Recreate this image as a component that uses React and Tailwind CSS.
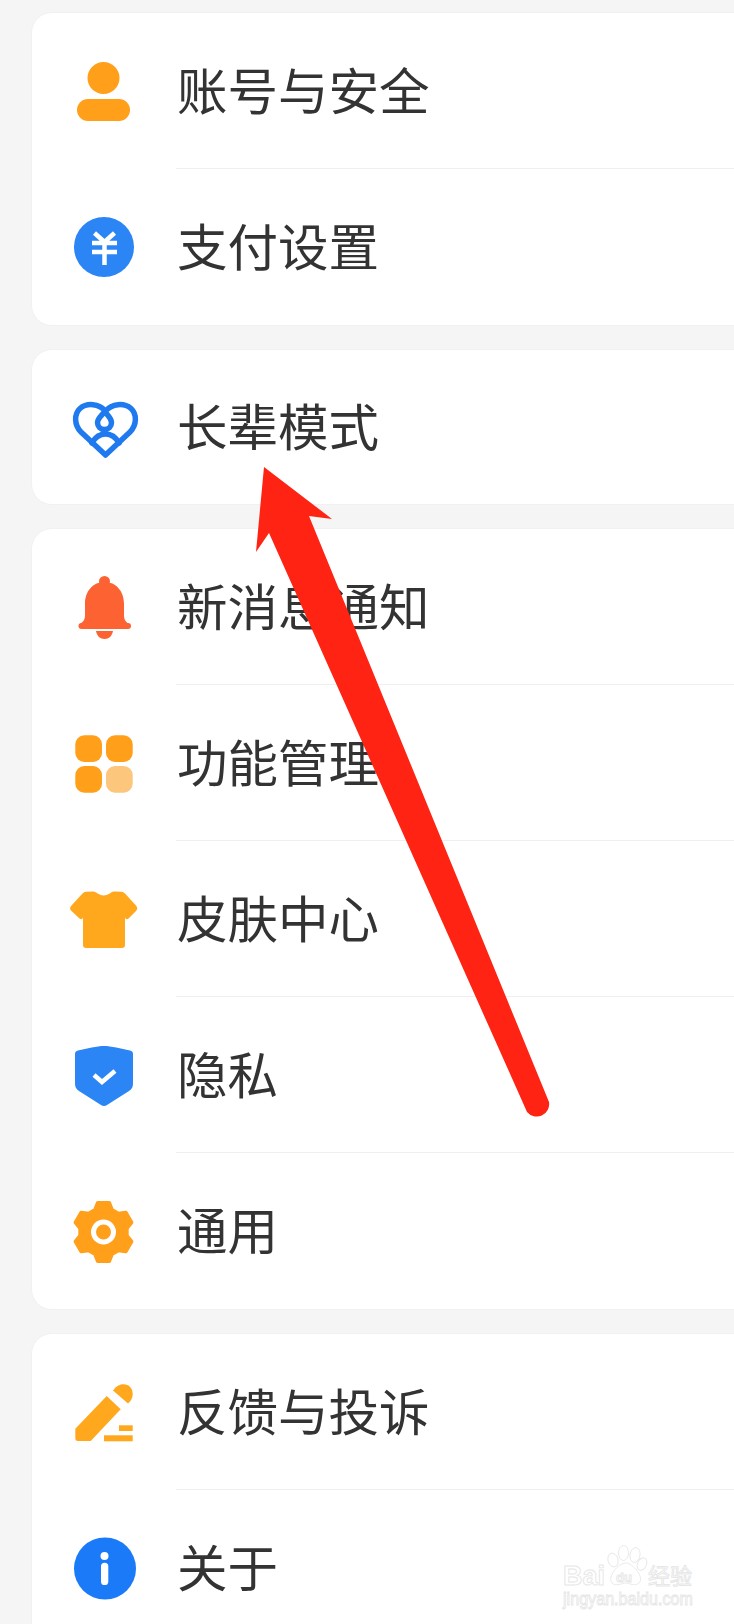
const ORANGE = "#ff9f1a";
const AMBER = "#ffa81d";
const BLUE = "#2b85f5";
const DEEP = "#1a7af8";

function Ico({ children }) {
  return (
    <svg viewBox="0 0 72 72" className="w-[72px] h-[72px] overflow-visible">
      {children}
    </svg>
  );
}

const Person = () => (
  <Ico>
    <circle cx="35.5" cy="23" r="16" fill={ORANGE} />
    <rect x="9" y="44" width="53" height="22" rx="11" fill={ORANGE} />
  </Ico>
);

const Yen = () => (
  <Ico>
    <circle cx="36" cy="36" r="30" fill={BLUE} />
    <path d="M26.5 22L36.5 31M46.5 22L36.5 31M24 32H49M24 41H49M36.5 31V54" stroke="#fff" strokeWidth="4.5" fill="none" />
  </Ico>
);

const Heart = () => (
  <Ico>
    <g fill="none" stroke="#1f7aef" strokeWidth="5.5" strokeLinecap="round" strokeLinejoin="round">
      <path d="M37.5 64L13 41C6 34 6 23 12 17.5C19 11.5 31 12.5 37.5 20C44 12.5 56 11.5 63 17.5C69 23 69 34 62 41Z" />
      <path d="M36.8 20C39 24.5 43.5 27 43.5 31.5C43.5 35.5 40.5 38.5 36.5 38.5C32.5 38.5 29.5 35.5 29.5 31.5C29.5 27 34.5 24.5 36.8 20Z" />
      <path d="M24 52C27 46.5 31.5 43 37.5 43C43.5 43 48 46.5 51 52" />
    </g>
  </Ico>
);

const Bell = () => (
  <Ico>
    <circle cx="36.5" cy="10.5" r="5.5" fill="#fc6232" />
    <path d="M36.5 11C25 11 17 20 17 33V44C17 49 15 51 12 53H61C58 51 56 49 56 44V33C56 20 48 11 36.5 11Z" fill="#fc6232" />
    <rect x="10.5" y="52" width="52.5" height="6" rx="3" fill="#fc6232" />
    <path d="M28 60H45C44 65 41 68 36.5 68C32 68 29 65 28 60Z" fill="#fc6232" />
  </Ico>
);

const Grid4 = () => (
  <Ico>
    <rect x="7.3" y="8.3" width="26.7" height="26.7" rx="9" fill={ORANGE} />
    <rect x="38" y="8.3" width="26.7" height="26.7" rx="9" fill={ORANGE} />
    <rect x="7.3" y="39" width="26.7" height="26.7" rx="9" fill={ORANGE} />
    <rect x="38" y="39" width="26.7" height="26.7" rx="9" fill="#fcc67c" />
  </Ico>
);

const Shirt = () => (
  <Ico>
    <path
      d="M25 8.5C29 9 31 12.5 35.7 12.5C40.5 12.5 42.5 9 46 8.5L53.5 8.7C55 8.9 56 9.5 57 10.5L68 22.5C69.6 24.3 69.6 26.3 68 28L60.5 35.5C59 37 57 36 57 34V62C57 64 56 65 54 65H18C16 65 15 64 15 62V34C15 36 13 37 11.5 35.5L3.5 28C1.6 26.3 1.6 24.3 3.5 22.5L14.5 10.5C15.5 9.5 16.5 8.9 18 8.7Z"
      fill={AMBER}
    />
  </Ico>
);

const Shield = () => (
  <Ico>
    <path
      d="M36 7C43 7 53 9.5 62 11.5C64 12 65 13 65 15V44C65 48 64 50 61 52L39 66C37 67.3 35 67.3 33 66L11 52C8 50 7 48 7 44V15C7 13 8 12 10 11.5C19 9.5 29 7 36 7Z"
      fill={BLUE}
    />
    <path d="M26 36L34 43L47 32" stroke="#fff" strokeWidth="4.5" fill="none" />
  </Ico>
);

function gearPoints(cx, cy, ro, ri) {
  const pts = [];
  for (let i = 0; i < 6; i++) {
    const a = -90 + i * 60;
    [[-21, ri], [-11, ro], [11, ro], [21, ri]].forEach(([d, r]) => {
      const t = ((a + d) * Math.PI) / 180;
      pts.push(`${(cx + r * Math.cos(t)).toFixed(2)},${(cy + r * Math.sin(t)).toFixed(2)}`);
    });
  }
  return pts.join(" ");
}

const Gear = () => (
  <Ico>
    <polygon points={gearPoints(35.5, 37, 29.5, 23.5)} fill={ORANGE} stroke={ORANGE} strokeWidth="4" strokeLinejoin="round" />
    <circle cx="35.5" cy="37" r="10" fill={ORANGE} stroke="#fff" strokeWidth="5" />
  </Ico>
);

const Pencil = () => (
  <Ico>
    <path d="M45 14.5C49 9.5 52 8.3 55.5 8.3C61 8.3 64.7 12.5 64.7 18C64.7 22 63 25 60 27.5Z" fill={AMBER} />
    <path d="M38.7 20L52.7 33.3L22.7 65H10C8 65 7.3 64 7.3 62V52.7Z" fill={AMBER} />
    <rect x="51" y="49.3" width="13.7" height="5.7" fill={AMBER} />
    <rect x="36" y="59.3" width="28.7" height="6" fill={AMBER} />
  </Ico>
);

const Info = () => (
  <Ico>
    <circle cx="37" cy="36.5" r="31" fill={DEEP} />
    <circle cx="36.5" cy="24" r="4" fill="#fff" />
    <rect x="33" y="30.7" width="7.3" height="22.3" rx="3.6" fill="#fff" />
  </Ico>
);

function Row({ icon, label, divider, height = "h-[155px]" }) {
  return (
    <div className="flex flex-col">
      <div className={`flex items-center ${height}`}>
        <div className="w-[144px] pl-[36px] flex items-center shrink-0">{icon}</div>
        <span className="text-[50.5px] leading-none text-[#333333] whitespace-nowrap ml-[1px] pb-[5px]">{label}</span>
      </div>
      {divider && <div className="h-px ml-[144px] bg-[#efefef]" />}
    </div>
  );
}

function Card({ children }) {
  return <div className="bg-white rounded-l-[20px] shadow-[0_0_0_1px_#f1f1f1] flex flex-col">{children}</div>;
}

function Arrow() {
  return (
    <svg className="absolute left-0 top-0 w-[734px] h-[1624px] pointer-events-none" viewBox="0 0 734 1624">
      <path
        d="M264 467L332 519L309 516L549 1102A12.5 12.5 0 0 1 527 1112L269 533L256 552Z"
        fill="#ff2314"
      />
    </svg>
  );
}

function Watermark() {
  const ink = { fill: "none", stroke: "#e6e6e6", strokeWidth: 0.9 };
  return (
    <svg className="absolute left-[550px] top-[1520px] w-[160px] h-[104px]" viewBox="-10 -20 160 104">
      <text x="3" y="45" fontFamily="'Liberation Sans', sans-serif" fontWeight="700" fontSize="27" {...ink}>Bai</text>
      <ellipse cx="53" cy="20" rx="5" ry="7" {...ink} transform="rotate(-15 53 20)" />
      <ellipse cx="63.5" cy="13" rx="5" ry="7.5" {...ink} />
      <ellipse cx="75" cy="15" rx="5" ry="7.5" {...ink} transform="rotate(10 75 15)" />
      <ellipse cx="82" cy="24" rx="4.5" ry="6.5" {...ink} transform="rotate(25 82 24)" />
      <path d="M66 23C73 23 85 38 79 43C74 47 70 43 66 43C62 43 56 47 52 43C47 37 58 23 66 23Z" {...ink} />
      <text x="56" y="42" fontFamily="'Liberation Sans', sans-serif" fontWeight="700" fontSize="13" {...ink}>du</text>
      <text x="88" y="44" fontFamily="'Noto Sans CJK SC', sans-serif" fontSize="22" {...ink}>经验</text>
      <text x="3" y="65" fontFamily="'Liberation Sans', sans-serif" fontSize="18.5" textLength="130" lengthAdjust="spacingAndGlyphs" {...ink}>jingyan.baidu.com</text>
    </svg>
  );
}

export default function App() {
  return (
    <div className="relative w-[734px] h-[1624px] overflow-hidden bg-[#f5f5f5] font-['Noto_Sans_CJK_SC','Noto_Sans',sans-serif]">
      <div className="flex flex-col gap-[25px] pt-[13px] pl-[32px]">
        <Card>
          <Row icon={<Person />} label="账号与安全" divider />
          <Row icon={<Yen />} label="支付设置" height="h-[156px]" />
        </Card>
        <Card>
          <Row icon={<Heart />} label="长辈模式" height="h-[154px]" />
        </Card>
        <Card>
          <Row icon={<Bell />} label="新消息通知" divider />
          <Row icon={<Grid4 />} label="功能管理" divider />
          <Row icon={<Shirt />} label="皮肤中心" divider />
          <Row icon={<Shield />} label="隐私" divider />
          <Row icon={<Gear />} label="通用" height="h-[156px]" />
        </Card>
        <Card>
          <Row icon={<Pencil />} label="反馈与投诉" divider />
          <Row icon={<Info />} label="关于" height="h-[156px]" />
        </Card>
      </div>
      <Arrow />
      <Watermark />
    </div>
  );
}
